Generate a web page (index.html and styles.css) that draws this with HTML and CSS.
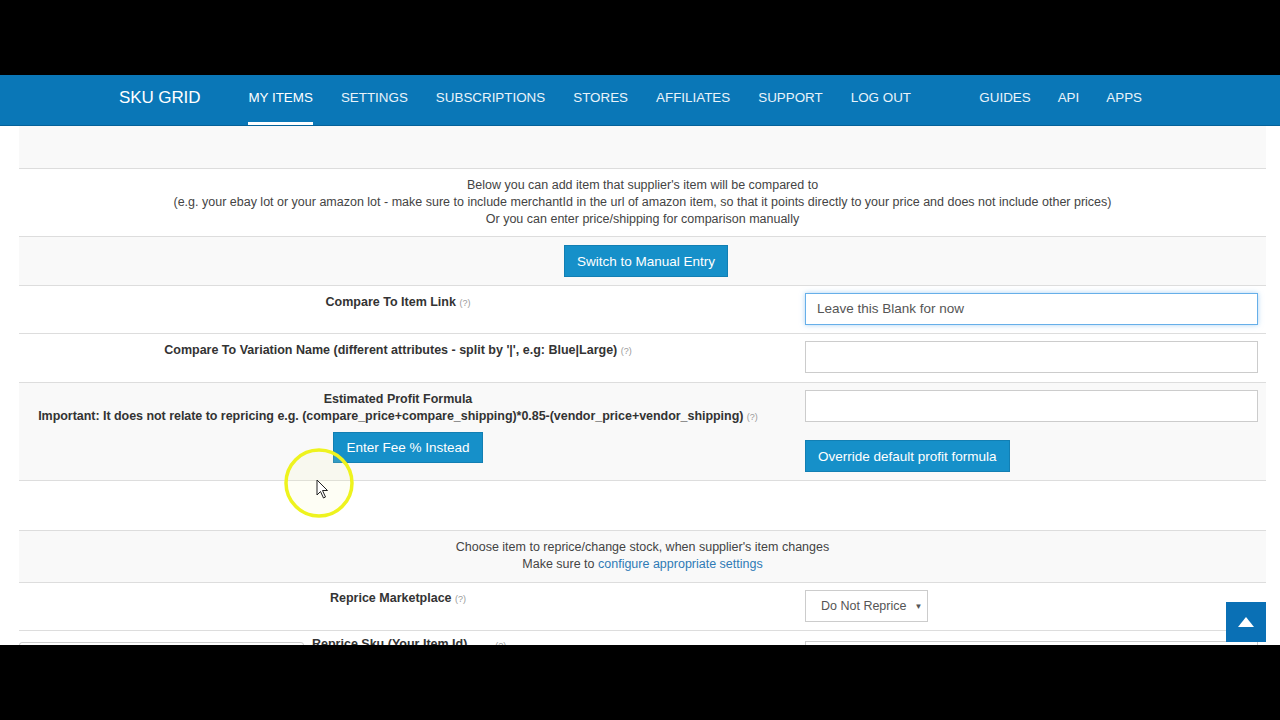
FILE: index.html
```html
<!DOCTYPE html>
<html>
<head>
<meta charset="utf-8">
<link rel="stylesheet" href="styles.css">
</head>
<body>
<div class="bar-top"></div>
<div class="screen">
  <nav class="nav">
    <span class="brand">SKU GRID</span>
    <ul class="menu">
      <li class="active">MY ITEMS</li>
      <li>SETTINGS</li>
      <li>SUBSCRIPTIONS</li>
      <li>STORES</li>
      <li>AFFILIATES</li>
      <li>SUPPORT</li>
      <li>LOG OUT</li>
    </ul>
    <ul class="menu menu-right">
      <li>GUIDES</li>
      <li>API</li>
      <li>APPS</li>
    </ul>
  </nav>
  <div class="content">
    <div class="table">
      <div class="row grey full r1"></div>
      <div class="row full r2">
        <p>Below you can add item that supplier's item will be compared to</p>
        <p>(e.g. your ebay lot or your amazon lot - make sure to include merchantId in the url of amazon item, so that it points directly to your price and does not include other prices)</p>
        <p>Or you can enter price/shipping for comparison manually</p>
      </div>
      <div class="row grey full r3">
        <button class="btn btn-switch">Switch to Manual Entry</button>
      </div>
      <div class="row r4">
        <div class="lbl"><b>Compare To Item Link</b> <span class="q">(?)</span></div>
        <div class="val"><div class="input focus">Leave this Blank for now</div></div>
      </div>
      <div class="row r5">
        <div class="lbl"><b>Compare To Variation Name (different attributes - split by '|', e.g: Blue|Large)</b> <span class="q">(?)</span></div>
        <div class="val"><div class="input"></div></div>
      </div>
      <div class="row grey r6">
        <div class="lbl">
          <b>Estimated Profit Formula</b><br>
          <b class="imp">Important: It does not relate to repricing e.g. (compare_price+compare_shipping)*0.85-(vendor_price+vendor_shipping)</b> <span class="q">(?)</span>
          <div class="btn-wrap"><button class="btn btn-fee">Enter Fee % Instead</button></div>
        </div>
        <div class="val">
          <div class="input"></div>
          <button class="btn btn-override">Override default profit formula</button>
        </div>
      </div>
      <div class="row full r7"></div>
      <div class="row grey full r8">
        <p>Choose item to reprice/change stock, when supplier's item changes</p>
        <p>Make sure to <a class="link">configure appropriate settings</a></p>
      </div>
      <div class="row r9">
        <div class="lbl"><b>Reprice Marketplace</b> <span class="q">(?)</span></div>
        <div class="val"><div class="select"><span>Do Not Reprice</span><span class="caret">&#9660;</span></div></div>
      </div>
      <div class="row r10">
        <div class="lbl lbl10"><div class="mini-input"></div><b>Reprice Sku (Your Item Id)</b><span class="q">(?)</span></div>
        <div class="val"><div class="input input10"></div></div>
      </div>
    </div>
  </div>
  <a class="totop"><svg width="16" height="10" viewBox="0 0 16 10"><path d="M8 0 L16 10 L0 10 Z" fill="#fff"/></svg></a>
  <div class="cursor">
    <svg width="80" height="80" viewBox="0 0 80 80">
      <circle cx="40" cy="40" r="33" fill="rgba(250,250,170,0.12)" stroke="#eef31e" stroke-width="3.5"/>
      <path d="M38 37 L38 52 L41.5 48.5 L44.5 55 L46.5 54 L43.5 47.5 L48.5 47.5 Z" fill="#fff" stroke="#222" stroke-width="1" stroke-linejoin="round"/>
    </svg>
  </div>
</div>
<div class="bar-bottom"></div>
</body>
</html>
```

FILE: styles.css
```css
* { box-sizing: border-box; }
html, body { margin: 0; padding: 0; background: #000; }
body { font-family: "Liberation Sans", Arial, sans-serif; width: 1280px; height: 720px; overflow: hidden; }
.bar-top { height: 75px; background: #000; }
.bar-bottom { height: 75px; background: #000; }
.screen { position: relative; height: 570px; background: #fff; overflow: hidden; }

.nav {
  height: 51px;
  background: #0a77b7;
  border-bottom: 1px solid #05629a;
  display: flex;
  align-items: stretch;
  padding-left: 119px;
  padding-right: 138px;
  color: #fff;
}
.brand { font-size: 17px; line-height: 46px; margin-right: 48px; letter-spacing: -0.1px; }
.menu { list-style: none; margin: 0; padding: 0; display: flex; gap: 28px; }
.menu li { font-size: 13.4px; line-height: 46px; border-bottom: 3px solid transparent; color: #e9f3fa; }
.menu li.active { border-bottom-color: #fff; color: #fff; }
.menu-right { margin-left: auto; gap: 27px; }

.content { padding: 0 14px 0 19px; }
.table { font-size: 12.5px; color: #444; line-height: 17px; }
.row { display: grid; grid-template-columns: 758px 1fr; border-top: 1px solid #ddd; background: #fff; }
.row.grey { background: #f9f9f9; }
.row.full { display: block; text-align: center; }
.row p { margin: 0; }
.r1 { height: 42px; border-top: none; }
.r2 { height: 68px; padding-top: 8px; }
.r3 { height: 49px; padding-top: 8px; }
.r4 { height: 48px; }
.r5 { height: 49px; }
.r6 { height: 98px; }
.r7 { height: 50px; }
.r8 { height: 52px; padding-top: 8px; }
.r9 { height: 48px; }
.r10 { height: 40px; }

.lbl { text-align: center; padding: 8px 8px 7px; color: #333; }
.lbl b { font-size: 12.5px; font-weight: bold; }
.lbl b.imp { letter-spacing: -0.04px; }
.q { font-size: 9px; color: #999; }
.val { padding: 7px 8px 7px 28px; }

.input {
  height: 32px;
  border: 1px solid #ccc;
  background: #fff;
  font-size: 13.5px;
  color: #555;
  padding: 0 11px;
  line-height: 30px;
}
.input.focus { border-color: #66afe9; box-shadow: 0 0 5px rgba(102,175,233,0.55); }

.btn {
  font-family: "Liberation Sans", Arial, sans-serif;
  font-size: 13.5px;
  color: #fff;
  background: #1690c9;
  border: 1px solid #127fb3;
  height: 32px;
  padding: 0 12px;
  cursor: pointer;
}
.btn-switch { margin-left: 7px; }
.btn-wrap { margin-top: 6px; padding-left: 20px; }
.btn-fee { height: 31px; padding: 0 12px; }
.btn-override { margin-top: 18px; }

.link { color: #2f7bb6; text-decoration: none; }

.r9 .lbl { padding-top: 7px; }
.select {
  display: flex;
  align-items: center;
  white-space: nowrap;
  width: 123px;
  height: 32px;
  border: 1px solid #ccc;
  background: #fff;
  font-size: 12.5px;
  color: #555;
  padding-left: 15px;
}
.caret { font-size: 8px; margin-left: 8px; color: #555; }

.lbl10 { display: flex; align-items: flex-start; padding: 5px 8px 0 0; }
.mini-input { width: 285px; height: 30px; margin-top: 6px; border: 1px solid #ccc; border-radius: 3px; background: #fff; margin-right: 8px; }
.lbl10 .q { margin-left: 28px; margin-top: 2px; }
.r10 .val { padding-top: 10px; }

.totop {
  position: absolute;
  left: 1226px;
  top: 527px;
  width: 40px;
  height: 40px;
  background: #0a70b5;
  display: flex;
  align-items: center;
  justify-content: center;
}
.cursor { position: absolute; left: 279px; top: 368px; width: 80px; height: 80px; }
.cursor svg { display: block; }
```
